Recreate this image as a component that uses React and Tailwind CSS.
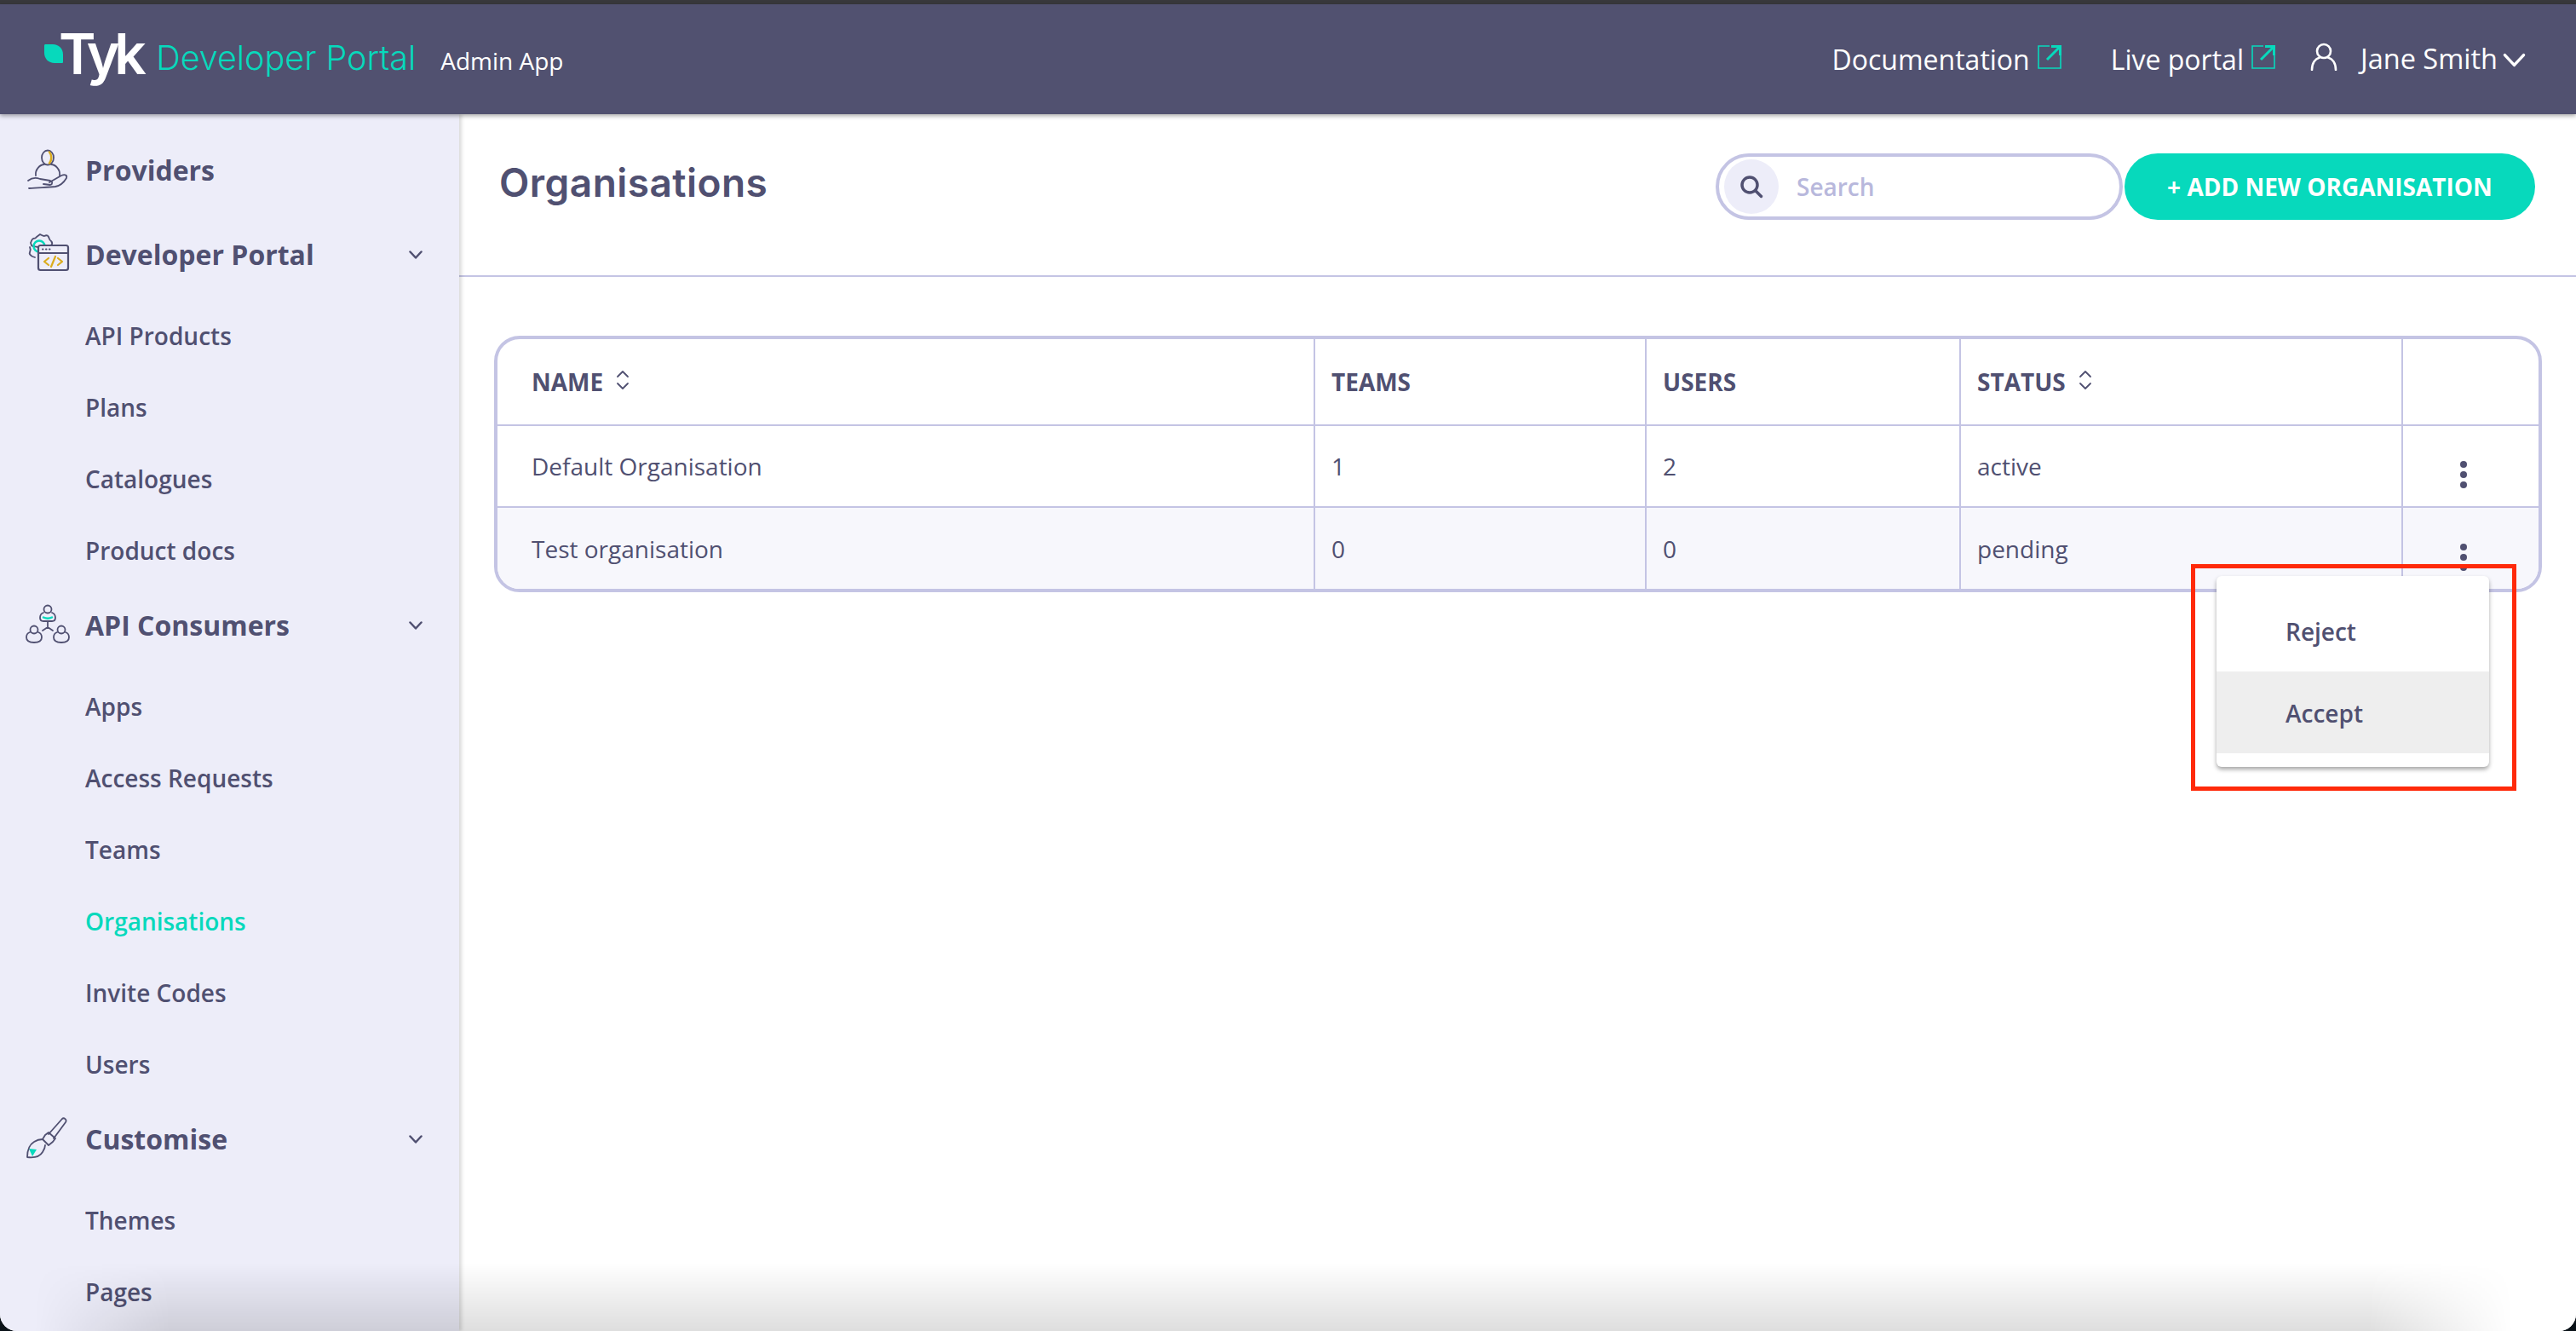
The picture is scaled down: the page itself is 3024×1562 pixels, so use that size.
import React from 'react';

const LINE = '#505071';
const TEAL = '#07d9bc';
const GOLD = '#dbac1c';

const ProvidersIcon = () => (
  <svg width="52" height="52" viewBox="0 0 52 52" fill="none" stroke={LINE} strokeWidth="1.8" strokeLinecap="round" strokeLinejoin="round">
    <ellipse cx="26" cy="11" rx="7" ry="8.5" />
    <path d="M28 4.5c3 3.5 3 9.5 0 13" stroke={GOLD} strokeWidth="2.5" />
    <path d="M12 32c-1-7 5-13 10-13M40 32c1-7-5-13-10-13" />
    <path d="M3 38c5-4 9-4 14-2l12 2c3 1 3 4 0 5l-8-1" />
    <path d="M28 40l14-8c5-2 7 0 6 3-3 5-7 9-13 10-8 1-18 1-31 2" />
  </svg>
);

const PortalIcon = () => (
  <svg width="52" height="52" viewBox="0 0 52 52" fill="none" stroke={LINE} strokeWidth="1.8" strokeLinecap="round" strokeLinejoin="round">
    <path d="M14 17c-2-1-6 0-7-2l-1-3c1-2 1-4 3-5 2 0 3 0 4-2l4-3c2 1 3 2 5 2 2-1 4-1 5 1 1 2 1 4 3 5 1 1 2 3 0 5" />
    <path d="M5 17c1 2 1 4 0 6-1 2 1 4 3 5l3 1" />
    <circle cx="16" cy="16" r="6.5" stroke={TEAL} strokeWidth="2.5" />
    <rect x="15" y="15" width="35" height="29" rx="2.5" fill="#ededf9" strokeWidth="2.2" />
    <path d="M16 24h33" strokeWidth="2" />
    <path d="M20 19.5h.5M24 19.5h.5M28 19.5h.5" strokeWidth="2" />
    <path d="M27 30l-5 4 5 4M38 30l5 4-5 4M35 28l-5 12" stroke={GOLD} strokeWidth="2.2" />
  </svg>
);

const ConsumersIcon = () => (
  <svg width="52" height="52" viewBox="0 0 52 52" fill="none" stroke={LINE} strokeWidth="1.8" strokeLinecap="round" strokeLinejoin="round">
    <circle cx="26" cy="7" r="4.5" />
    <path d="M21 11c-3 1-4 3-4 6 0 3 2 4 4 4h10c2 0 4-1 4-4 0-3-1-5-4-6" />
    <path d="M21 16.500c3 1.500 7 1.500 10 0" stroke={TEAL} strokeWidth="2.5" />
    <path d="M26 21v7M26 28l-6 4M26 28l6 4" />
    <circle cx="10" cy="31" r="4.5" />
    <path d="M5 34c-3 1-4 3-4 6 0 4 3 6 9 6s9-2 9-6c0-3-1-5-4-6" />
    <circle cx="42" cy="31" r="4.5" />
    <path d="M37 34c-3 1-4 3-4 6 0 4 3 6 9 6s9-2 9-6c0-3-1-5-4-6" />
  </svg>
);

const BrushIcon = () => (
  <svg width="52" height="52" viewBox="0 0 52 52" fill="none" stroke={LINE} strokeWidth="1.8" strokeLinecap="round" strokeLinejoin="round">
    <path d="M4 37l4 9 5-8z" fill={TEAL} stroke="none" />
    <path d="M27 20l16-18c2-2 6 1 4 4L33 25" />
    <path d="M23 21l4-3 8 7-3 4-5 4-7-7z" />
    <path d="M20 26c-4 0-7 1-10 3-5 3-8 10-8 18 8 1 15-1 18-6 2-3 3-5 3-8" />
  </svg>
);

const Chevron = ({ className, sw = 2.5 }) => (
  <svg className={className} viewBox="0 0 16 10" fill="none" stroke="currentColor" strokeWidth={sw} strokeLinecap="round" strokeLinejoin="round">
    <path d="M1.5 1.5L8 8.5l6.5-7" />
  </svg>
);

const SortIcon = () => (
  <svg className="ml-[14px] mb-[4px] w-[18px] h-[24px]" viewBox="0 0 18 24" fill="none" stroke={LINE} strokeWidth="1.8" strokeLinecap="round" strokeLinejoin="round">
    <path d="M3 8l6-6 6 6M3 16l6 6 6-6" />
  </svg>
);

const ExternalIcon = () => (
  <svg className="w-[28px] h-[28px] mb-[6px]" viewBox="0 0 28 28" fill="none" stroke={TEAL}>
    <path d="M14 1H1v26h26V10" strokeWidth="1.6" />
    <path d="M11 17L26 2M16 1.5h10.5V12" strokeWidth="3" />
  </svg>
);

const Section = ({ icon, title, arrow }) => (
  <div className="h-[90px] flex items-center pl-[30px] pr-[43px]">
    <span className="w-[52px] h-[52px] shrink-0">{icon}</span>
    <span className="ml-[18px] text-[32px] font-bold">{title}</span>
    {arrow && <Chevron className="ml-auto w-[16px] h-[10px]" />}
  </div>
);

const SubItem = ({ label, active }) => (
  <div className={`h-[84px] flex items-center pl-[100px] text-[28px] font-semibold ${active ? 'text-[#07d9bc]' : ''}`}>
    {label}
  </div>
);

const Sidebar = () => (
  <aside className="w-[539px] shrink-0 bg-[#ededf9] text-[#505071] pt-[21px] shadow-[3px_0_4px_rgba(0,0,0,0.14)] overflow-hidden z-10">
    <div className="mb-[9px]">
      <Section icon={<ProvidersIcon />} title="Providers" />
    </div>
    <Section icon={<PortalIcon />} title="Developer Portal" arrow />
    <div className="mt-[8px] mb-[1px]">
      {['API Products', 'Plans', 'Catalogues', 'Product docs'].map((item) => (
        <SubItem key={item} label={item} />
      ))}
    </div>
    <Section icon={<ConsumersIcon />} title="API Consumers" arrow />
    <div className="mt-[8px] mb-[1px]">
      <SubItem label="Apps" />
      <SubItem label="Access Requests" />
      <SubItem label="Teams" />
      <SubItem label="Organisations" active />
      <SubItem label="Invite Codes" />
      <SubItem label="Users" />
    </div>
    <Section icon={<BrushIcon />} title="Customise" arrow />
    <div className="mt-[8px]">
      <SubItem label="Themes" />
      <SubItem label="Pages" />
    </div>
  </aside>
);

const Header = () => (
  <header className="relative z-20 h-[129px] shrink-0 bg-[#515170] shadow-[0_2px_5px_rgba(0,0,0,0.35)] flex items-center pl-[52px] pr-[58px] text-white">
    <svg className="w-[22px] h-[22px] mb-[14px]" viewBox="0 0 22 22" fill={TEAL}>
      <path d="M0 1.5C0 .5.5 0 1.5 0H10c7 0 12 5 12 12v8.5c0 1-.5 1.5-1.5 1.5H12C5 22 0 17 0 10z" />
    </svg>
    <span className="font-['Inter',sans-serif] font-semibold text-[66px] leading-none tracking-[-0.1em] ml-[-5px] mb-[14px]">Tyk</span>
    <span className="font-['Inter',sans-serif] font-light text-[#07d9bc] text-[39.500px] leading-none ml-[18px] mb-[2px]">Developer Portal</span>
    <span className="text-[28px] ml-[29px] mt-[2px]">Admin App</span>
    <div className="ml-auto flex items-center">
      <span className="text-[32px] mr-[9px]">Documentation</span>
      <ExternalIcon />
      <span className="text-[32px] ml-[58px] mr-[9px]">Live portal</span>
      <ExternalIcon />
      <svg className="ml-[41px] w-[32px] h-[33px] mb-[6px]" viewBox="0 0 32 33" fill="none" stroke="#fff" strokeWidth="2.6" strokeLinecap="round">
        <circle cx="16" cy="10" r="8" />
        <path d="M2 32c0-8 4-13 9-14.500M30 32c0-8-4-13-9-14.500" />
      </svg>
      <span className="text-[32.500px] ml-[27px]">Jane Smith</span>
      <Chevron className="ml-[5px] w-[29px] h-[17px] mt-[2px]" sw={2} />
    </div>
  </header>
);

const COLS = 'grid grid-cols-[960px_389px_369px_519px_1fr]';
const CELL = 'flex items-center pl-[19px] border-r-2 border-[#c4c4e4]';
const FIRST_CELL = 'flex items-center pl-[40px] border-r-2 border-[#c4c4e4]';

const Dots = () => (
  <div className="flex flex-col items-center justify-center h-full gap-[4px] pt-[20px] pr-[18px]">
    <span className="w-[8px] h-[8px] rounded-full bg-[#505071]" />
    <span className="w-[8px] h-[8px] rounded-full bg-[#505071]" />
    <span className="w-[8px] h-[8px] rounded-full bg-[#505071]" />
  </div>
);

const rows = [
  { name: 'Default Organisation', teams: 1, users: 2, status: 'active', h: 'h-[94px]', bg: 'bg-white' },
  { name: 'Test organisation', teams: 0, users: 0, status: 'pending', h: 'h-[95px]', bg: 'bg-[#f7f7fc]' },
];

const OrgTable = () => (
  <div className="relative">
    <div className="border-4 border-[#c4c4e4] rounded-[30px] overflow-hidden text-[#505071] text-[28px]">
      <div className={`${COLS} h-[100px] font-bold`}>
        <div className={FIRST_CELL}>NAME<SortIcon /></div>
        <div className={CELL}>TEAMS</div>
        <div className={CELL}>USERS</div>
        <div className={CELL}>STATUS<SortIcon /></div>
        <div />
      </div>
      {rows.map((row) => (
        <div key={row.name} className={`${COLS} ${row.h} ${row.bg} border-t-2 border-[#c4c4e4] box-content`}>
          <div className={FIRST_CELL}>{row.name}</div>
          <div className={CELL}>{row.teams}</div>
          <div className={CELL}>{row.users}</div>
          <div className={CELL}>{row.status}</div>
          <Dots />
        </div>
      ))}
    </div>

    {/* row action menu */}
    <div className="absolute top-[282px] right-[62px] w-[320px] py-[16px] bg-white rounded-[6px] shadow-[0_3px_5px_rgba(0,0,0,0.35)] text-[#505071] text-[28px] font-semibold">
      <div className="h-[96px] flex items-center pl-[81px] pt-[2px]">Reject</div>
      <div className="h-[96px] flex items-center pl-[81px] pt-[2px] bg-[#eeeeee]">Accept</div>
    </div>
    {/* red highlight drawn on the screenshot */}
    <div className="absolute top-[268px] right-[30px] w-[382px] h-[266px] border-[5px] border-[#ff2a0a]" />
  </div>
);

const Main = () => (
  <main className="flex-1 bg-white min-w-0">
    <div className="h-[191px] border-b-2 border-[#c4c4e4] flex items-start pl-[47px] pr-[48px] pt-[46px]">
      <h1 className="font-['Inter',sans-serif] font-semibold text-[46px] leading-[60px] mt-[4px] text-[#505071] tracking-[0.01em]">Organisations</h1>
      <div className="ml-auto relative w-[478px] h-[78px] rounded-full border-4 border-[#c4c4e4] flex items-center pl-[6px]">
        <span className="w-[64px] h-[64px] rounded-full bg-[#ededf9] flex items-center justify-center">
          <svg className="w-[28px] h-[28px]" viewBox="0 0 28 28" fill="none" stroke="#505071" strokeWidth="3.5" strokeLinecap="round">
            <circle cx="12" cy="12" r="9" />
            <path d="M19 19l6.500 6.500" />
          </svg>
        </span>
        <span className="ml-[21px] text-[28px] font-semibold text-[#b8b8dc]">Search</span>
      </div>
      <button className="ml-[2px] w-[482px] h-[78px] rounded-full bg-[#07d9bc] text-white text-[28px] font-bold">+ ADD NEW ORGANISATION</button>
    </div>
    <div className="pt-[69px] pl-[41px] pr-[40px]">
      <OrgTable />
    </div>
  </main>
);

export default function App() {
  return (
    <div className="relative h-[1562px] overflow-hidden bg-[#0a1218] font-['Open_Sans',sans-serif]">
      <div className="h-full rounded-b-[20px] overflow-hidden flex flex-col bg-white">
        <div className="h-[5px] shrink-0 bg-[#38383c]" />
        <Header />
        <div className="flex flex-1 min-h-0">
          <Sidebar />
          <Main />
        </div>
      </div>
      {/* window fade along the bottom edge */}
      <div className="absolute bottom-0 left-0 right-0 h-[80px] z-30 pointer-events-none bg-gradient-to-t from-black/[0.13] to-transparent [mask-image:linear-gradient(to_right,transparent_40px,black_200px,black_2780px,transparent_2950px)]" />
    </div>
  );
}
